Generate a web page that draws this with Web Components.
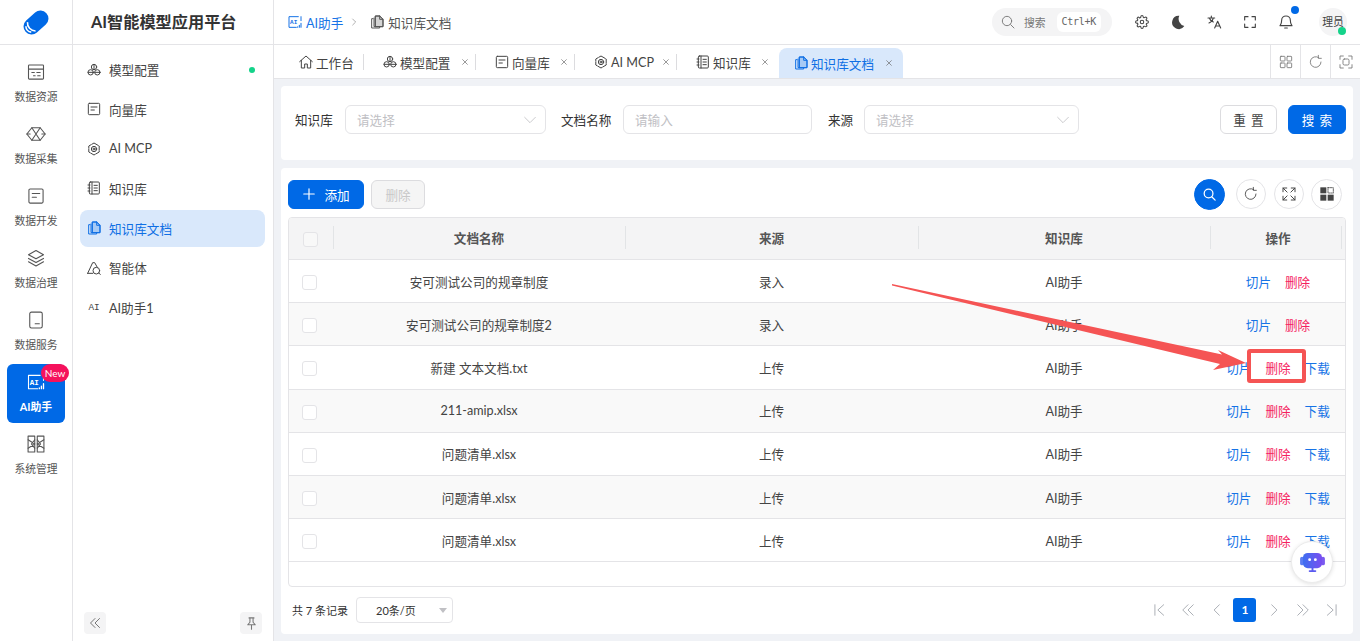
<!DOCTYPE html>
<html lang="zh">
<head>
<meta charset="utf-8">
<title>知识库文档</title>
<style>
    html, body {
        margin: 0;
        height: 100%;
        overflow: hidden;
        background: #fff;
        color: #333;
        font-family: Lato, "Noto Sans CJK SC", sans-serif;
        font-size: 12.6px;
    }
</style>
</head>
<body>
<app-shell>
    <nav-rail slot="rail">
        <rail-item icon="panel" label="数据资源"></rail-item>
        <rail-item icon="hexnet" label="数据采集"></rail-item>
        <rail-item icon="doc" label="数据开发"></rail-item>
        <rail-item icon="layers" label="数据治理"></rail-item>
        <rail-item icon="service" label="数据服务"></rail-item>
        <rail-item icon="aibox" label="AI助手" active badge="New"></rail-item>
        <rail-item icon="sys" label="系统管理"></rail-item>
    </nav-rail>
    <side-menu slot="side" title="AI智能模型应用平台">
        <menu-item icon="cubes" dot>模型配置</menu-item>
        <menu-item icon="doc">向量库</menu-item>
        <menu-item icon="mcp">AI MCP</menu-item>
        <menu-item icon="book">知识库</menu-item>
        <menu-item icon="docs" active>知识库文档</menu-item>
        <menu-item icon="agent">智能体</menu-item>
        <menu-item icon="ai">AI助手1</menu-item>
    </side-menu>
    <top-bar slot="top"></top-bar>
    <tab-bar slot="tabs">
        <tab-item icon="home" width="84" fixed>工作台</tab-item>
        <tab-item icon="cubes" width="112">模型配置</tab-item>
        <tab-item icon="doc" width="99">向量库</tab-item>
        <tab-item icon="mcp" width="102">AI MCP</tab-item>
        <tab-item icon="book" width="102">知识库</tab-item>
        <tab-item icon="docs" width="124" active>知识库文档</tab-item>
    </tab-bar>
    <filter-form slot="content"></filter-form>
    <doc-panel slot="content">
        <doc-row name="安可测试公司的规章制度" source="录入" kb="AI助手"></doc-row>
        <doc-row name="安可测试公司的规章制度2" source="录入" kb="AI助手"></doc-row>
        <doc-row name="新建 文本文档.txt" source="上传" kb="AI助手" download></doc-row>
        <doc-row name="211-amip.xlsx" source="上传" kb="AI助手" download></doc-row>
        <doc-row name="问题清单.xlsx" source="上传" kb="AI助手" download></doc-row>
        <doc-row name="问题清单.xlsx" source="上传" kb="AI助手" download></doc-row>
        <doc-row name="问题清单.xlsx" source="上传" kb="AI助手" download></doc-row>
    </doc-panel>
</app-shell>
<chat-bubble></chat-bubble>
<call-out></call-out>

<script>
const BLUE = '#0069e6';

// icon paths, all on a 24 box
const ICONS = {
    panel: '<rect x="3" y="3.5" width="18" height="17" rx="1"/><path d="M3 8.5h18M7 12.5h3M13 12.5h4M9 16.5h2M14 16.5h3"/>',
    hexnet: '<path d="M7 4.5h10L23 12l-6 7.5H7L1 12z"/><path d="M7 4.5l10 15M17 4.5L7 19.5"/><path d="M1 12h4M19 12h4"/>',
    doc: '<rect x="3.5" y="3.5" width="17" height="17" rx="1.5"/><path d="M7.5 9h9M7.5 13.5h5"/>',
    layers: '<path d="M12 3l9 5-9 5-9-5z"/><path d="M3 12.5l9 5 9-5"/><path d="M3 16.5l9 5 9-5"/>',
    service: '<rect x="4.5" y="2.5" width="15" height="19" rx="2"/><path d="M11 16.5h5"/>',
    aibox: '<path d="M17 4H3v16h11M21 4v6"/><text x="10" y="15" text-anchor="middle" font-size="9" font-weight="700" fill="currentColor" stroke="none" font-family="Liberation Mono">AI</text><path d="M16 20v-1M18.5 20v-3M21 20v-6" stroke-width="1.6"/>',
    sys: '<rect x="2.5" y="2.5" width="8" height="19"/><rect x="13.5" y="2.5" width="8" height="19"/><path d="M2.5 7l8 5-8 5M10.5 7l-4 5 4 5M21.5 7l-8 5 8 5M13.5 7l4 5-4 5"/>',
    cubes: '<circle cx="12" cy="7.5" r="4"/><circle cx="7" cy="15.5" r="4"/><circle cx="17" cy="15.5" r="4"/><path d="M12 3.5v8M3 15.5h8M13 15.5h8"/>',
    mcp: '<path d="M12 3l7.8 4.5v9L12 21l-7.8-4.5v-9z" stroke-dasharray="7 1.4"/><circle cx="12" cy="12" r="4"/><circle cx="12" cy="12" r="1.5"/>',
    book: '<rect x="5" y="3" width="15" height="18" rx="1.5"/><path d="M9 3v18M12 8h5M12 12h5M12 16h5M3 7.5h3M3 12h3M3 16.5h3"/>',
    docs: '<path d="M10 3h6l5 5v11H10z" fill="currentColor" fill-opacity=".25"/><path d="M16 3v5h5"/><path d="M6 7H4v14h12v-2"/><path d="M7.5 6v13H10"/><path d="M10 3h6l5 5v11H10z"/>',
    agent: '<path d="M2.5 20L10 4h3l4 7"/><path d="M2.5 20H10"/><circle cx="15.5" cy="16" r="5"/><path d="M19 19.5l2.5 2"/>',
    ai: '<text x="12" y="17" text-anchor="middle" font-size="14" fill="currentColor" stroke="none" font-family="Liberation Mono">AI</text>',
    home: '<path d="M2.5 11.5L12 3l9.5 8.5"/><path d="M5 9.5V21h5v-6h4v6h5V9.5"/>',
    search: '<circle cx="10.5" cy="10.5" r="7"/><path d="M16 16l5 5"/>',
    gear: '<circle cx="12" cy="12" r="3"/><path d="M19.4 15a1.65 1.65 0 0 0 .33 1.82l.06.06a2 2 0 1 1-2.83 2.83l-.06-.06a1.65 1.65 0 0 0-2.82 1.18V21a2 2 0 1 1-4 0v-.09a1.65 1.65 0 0 0-2.82-1.18l-.06.06a2 2 0 1 1-2.83-2.83l.06-.06A1.65 1.65 0 0 0 3.09 14H3a2 2 0 1 1 0-4h.09a1.65 1.65 0 0 0 1.18-2.82l-.06-.06a2 2 0 1 1 2.83-2.83l.06.06A1.65 1.65 0 0 0 10 3.09V3a2 2 0 1 1 4 0v.09a1.65 1.65 0 0 0 2.82 1.18l.06-.06a2 2 0 1 1 2.83 2.83l-.06.06A1.65 1.65 0 0 0 20.91 10H21a2 2 0 1 1 0 4h-.09a1.65 1.65 0 0 0-1.51 1z"/>',
    moon: '<path d="M14 2.500A10 10 0 1 0 21.500 18 11 11 0 0 1 14 2.500z" fill="currentColor" stroke="none"/>',
    lang: '<path d="M3 6h10M8 3v3M11 6c-.7 3.500-3 6-6.500 7.500M5 6c.7 2.500 2.500 4.500 6 6"/><path d="M13 21l4.500-10L22 21M14.500 18h6"/>',
    full: '<path d="M4 9V4h5M15 4h5v5M20 15v5h-5M9 20H4v-5"/>',
    bell: '<path d="M12 3a6.500 6.500 0 0 0-6.500 6.500c0 5-1.500 6.500-2.500 8h18c-1-1.500-2.500-3-2.500-8A6.500 6.500 0 0 0 12 3z"/><path d="M10 21h4"/>',
    grid: '<rect x="3.500" y="3.500" width="7" height="7" rx="1"/><rect x="13.500" y="3.500" width="7" height="7" rx="1"/><rect x="3.500" y="13.500" width="7" height="7" rx="1"/><rect x="13.500" y="13.500" width="7" height="7" rx="1"/>',
    refresh: '<path d="M19.500 12A8 8 0 1 1 16 5.400"/><path d="M15.500 2v4.500H20" />',
    focus: '<path d="M3 8V3h5M16 3h5v5M21 16v5h-5M8 21H3v-5"/><rect x="7.500" y="7.500" width="9" height="9" rx="2"/>',
    expand: '<path d="M4 9V4h5M4 4l5.500 5.500M20 9V4h-5M20 4l-5.500 5.500M4 15v5h5M4 20l5.500-5.500M20 15v5h-5M20 20l-5.500-5.500"/>',
    tiles: '<rect x="2" y="2" width="9" height="9" fill="currentColor" stroke="none"/><rect x="13.500" y="2.500" width="8" height="8" stroke-dasharray="2 1.500"/><rect x="2" y="13" width="9" height="9" fill="currentColor" stroke="none"/><rect x="13" y="13" width="9" height="9" fill="currentColor" stroke="none"/>',
    plus: '<path d="M12 3v18M3 12h18"/>',
    chevron: '<path d="M4 8l8 8 8-8"/>',
    close: '<path d="M5 5l14 14M19 5L5 19"/>',
    right: '<path d="M8 3l9 9-9 9"/>',
    left: '<path d="M16 3l-9 9 9 9"/>',
    dleft: '<path d="M12 3l-9 9 9 9M21 3l-9 9 9 9"/>',
    dright: '<path d="M12 3l9 9-9 9M3 3l9 9-9 9"/>',
    first: '<path d="M5 3v18M20 3l-10 9 10 9"/>',
    last: '<path d="M19 3v18M4 3l10 9-10 9"/>',
    pin: '<path d="M8 3h8M9.500 3v7L6 14h12l-3.500-4V3M12 14v7"/>'
};

class UiIcon extends HTMLElement {
    connectedCallback() {
        if (this.shadowRoot) return;
        const size = this.getAttribute('size') || 14;
        const weight = this.getAttribute('weight') || 1.7;
        this.attachShadow({ mode: 'open' }).innerHTML = `
            <style>
                :host { display: inline-flex; flex: none; width: ${size}px; height: ${size}px; }
                svg { width: 100%; height: 100%; display: block; }
            </style>
            <svg viewBox="0 0 24 24" fill="none" stroke="currentColor" stroke-width="${weight}"
                stroke-linecap="round" stroke-linejoin="round">${ICONS[this.getAttribute('name')] || ''}</svg>`;
    }
}
customElements.define('ui-icon', UiIcon);

const shellTemplate = document.createElement('template');
shellTemplate.innerHTML = `
    <style>
        :host { display: flex; height: 641px; width: 1360px; }
        .main { flex: 1; min-width: 0; display: flex; flex-direction: column; }
        .content {
            flex: 1;
            min-height: 0;
            display: flex;
            flex-direction: column;
            gap: 8px;
            padding: 7px;
            background: #f0f2f6;
        }
    </style>
    <slot name="rail"></slot>
    <slot name="side"></slot>
    <div class="main">
        <slot name="top"></slot>
        <slot name="tabs"></slot>
        <div class="content"><slot name="content"></slot></div>
    </div>
`;
class AppShell extends HTMLElement {
    connectedCallback() {
        this.attachShadow({ mode: 'open' }).appendChild(shellTemplate.content.cloneNode(true));
    }
}
customElements.define('app-shell', AppShell);

const railTemplate = document.createElement('template');
railTemplate.innerHTML = `
    <style>
        :host {
            display: flex;
            flex-direction: column;
            flex: none;
            width: 72px;
            border-right: 1px solid #e4e4e7;
        }
        .logo {
            height: 44px;
            border-bottom: 1px solid #e4e4e7;
            display: flex;
            align-items: center;
            justify-content: center;
        }
        .items { display: flex; flex-direction: column; align-items: center; padding-top: 9px; gap: 3px; }
    </style>
    <div class="logo">
        <svg width="26" height="27" viewBox="0 0 26 27">
            <g transform="rotate(-42 13 13.500)">
                <rect x="-1" y="5.500" width="28" height="16" rx="8" fill="#0069e6"/>
                <path d="M3 9.500a6 6 0 0 0 0 8" fill="none" stroke="#fff" stroke-width="1.600"/>
                <path d="M7 7.500a8 8 0 0 0 0 12" fill="none" stroke="#fff" stroke-width="1.600"/>
            </g>
        </svg>
    </div>
    <div class="items"><slot></slot></div>
`;
class NavRail extends HTMLElement {
    connectedCallback() {
        this.attachShadow({ mode: 'open' }).appendChild(railTemplate.content.cloneNode(true));
    }
}
customElements.define('nav-rail', NavRail);

class RailItem extends HTMLElement {
    connectedCallback() {
        const badge = this.getAttribute('badge');
        this.attachShadow({ mode: 'open' }).innerHTML = `
            <style>
                :host {
                    display: flex;
                    flex-direction: column;
                    align-items: center;
                    gap: 7px;
                    position: relative;
                    box-sizing: border-box;
                    padding-top: 8px;
                    width: 58px;
                    height: 59px;
                    border-radius: 6px;
                    color: #555;
                    font-size: 10.8px;
                    line-height: 15px;
                }
                :host([active]) { background: ${BLUE}; color: #fff; font-weight: 700; }
                .badge {
                    position: absolute;
                    top: 0;
                    right: -4px;
                    width: 28px;
                    height: 18px;
                    border-radius: 9px;
                    background: #f5115c;
                    color: #fff;
                    font-size: 10px;
                    font-weight: 400;
                    line-height: 18px;
                    text-align: center;
                }
            </style>
            <ui-icon name="${this.getAttribute('icon')}" size="20" weight="1.300"></ui-icon>
            <span>${this.getAttribute('label')}</span>
            ${badge ? `<span class="badge">${badge}</span>` : ''}
        `;
    }
}
customElements.define('rail-item', RailItem);

class SideMenu extends HTMLElement {
    connectedCallback() {
        this.attachShadow({ mode: 'open' }).innerHTML = `
            <style>
                :host {
                    display: flex;
                    flex-direction: column;
                    flex: none;
                    width: 200px;
                    border-right: 1px solid #e4e4e7;
                }
                .title {
                    height: 44px;
                    border-bottom: 1px solid #e4e4e7;
                    box-sizing: content-box;
                    padding-left: 18px;
                    line-height: 43px;
                    font-size: 16.2px;
                    font-weight: 700;
                    color: #333;
                }
                .items {
                    flex: 1;
                    display: flex;
                    flex-direction: column;
                    gap: 2.670px;
                    padding: 6px 8px 0 7px;
                }
                .foot { display: flex; justify-content: space-between; padding: 0 11px 7px; }
                .foot span {
                    width: 22px;
                    height: 22px;
                    border-radius: 4px;
                    background: #f4f4f5;
                    color: #777;
                    display: flex;
                    align-items: center;
                    justify-content: center;
                }
            </style>
            <div class="title">${this.getAttribute('title')}</div>
            <div class="items"><slot></slot></div>
            <div class="foot">
                <span><ui-icon name="dleft" size="12" weight="2"></ui-icon></span>
                <span><ui-icon name="pin" size="15"></ui-icon></span>
            </div>
        `;
    }
}
customElements.define('side-menu', SideMenu);

class MenuItem extends HTMLElement {
    connectedCallback() {
        const dot = this.hasAttribute('dot') ? '<i class="dot"></i>' : '';
        this.attachShadow({ mode: 'open' }).innerHTML = `
            <style>
                :host {
                    display: flex;
                    align-items: center;
                    gap: 7px;
                    height: 37px;
                    padding: 0 10px 0 6px;
                    border-radius: 8px;
                    color: #444;
                    font-size: 12.6px;
                }
                :host([active]) { background: #d9e8fb; color: #0f6fe4; }
                .dot { margin-left: auto; width: 6px; height: 6px; border-radius: 50%; background: #14d38a; }
            </style>
            <ui-icon name="${this.getAttribute('icon')}" size="16" weight="1.500"></ui-icon>
            <span><slot></slot></span>
            ${dot}
        `;
    }
}
customElements.define('menu-item', MenuItem);

const topTemplate = document.createElement('template');
topTemplate.innerHTML = `
    <style>
        :host {
            display: flex;
            align-items: center;
            flex: none;
            height: 44px;
            padding: 0 13px 0 13px;
            border-bottom: 1px solid #e4e4e7;
            box-sizing: content-box;
        }
        .crumb { display: flex; align-items: center; gap: 3px; font-size: 12.6px; color: #555; }
        .crumb.link { color: #1673e6; }
        .sep { margin: 0 11px 0 7px; color: #888; display: flex; }
        .tools { margin-left: auto; display: flex; align-items: center; }
        .search {
            display: flex;
            align-items: center;
            width: 120px;
            height: 28px;
            box-sizing: border-box;
            padding: 0 4px 0 8px;
            border-radius: 14px;
            background: #f4f4f5;
            color: #777;
            font-size: 10.8px;
            margin-right: 12px;
        }
        .search b {
            margin-left: 8px;
            margin-right: 11px;
            font-weight: 400;
        }
        kbd {
            background: #fff;
            border-radius: 6px;
            height: 20px;
            padding: 0 5px;
            font: 10px "DejaVu Sans Mono", monospace;
            line-height: 20px;
            letter-spacing: -.3px;
            color: #666;
        }
        .tool { width: 36px; display: flex; justify-content: center; color: #444; position: relative; }
        .blue-dot {
            position: absolute;
            top: -8px;
            right: 5px;
            width: 8px;
            height: 8px;
            border-radius: 50%;
            background: ${BLUE};
        }
        .avatar {
            position: relative;
            width: 28px;
            height: 28px;
            margin-left: 15px;
            border-radius: 50%;
            background: #f4f4f5;
            font-size: 10.8px;
            line-height: 28px;
            text-align: center;
            color: #444;
        }
        .avatar i {
            position: absolute;
            right: 1px;
            bottom: 1px;
            width: 8px;
            height: 8px;
            border-radius: 50%;
            background: #14d38a;
        }
    </style>
    <div class="crumb link"><ui-icon name="aibox" size="16" weight="1.500"></ui-icon>AI助手</div>
    <span class="sep"><ui-icon name="right" size="8" weight="2"></ui-icon></span>
    <div class="crumb"><ui-icon name="docs" size="16" weight="1.500"></ui-icon>知识库文档</div>
    <div class="tools">
        <div class="search">
            <ui-icon name="search" size="16" weight="1.400"></ui-icon>
            <b>搜索</b>
            <kbd>Ctrl+K</kbd>
        </div>
        <div class="tool"><ui-icon name="gear" size="14" weight="1.800"></ui-icon></div>
        <div class="tool"><ui-icon name="moon" size="16"></ui-icon></div>
        <div class="tool"><ui-icon name="lang" size="16"></ui-icon></div>
        <div class="tool"><ui-icon name="full" size="16"></ui-icon></div>
        <div class="tool"><ui-icon name="bell" size="16"></ui-icon><i class="blue-dot"></i></div>
        <div class="avatar">理员<i></i></div>
    </div>
`;
class TopBar extends HTMLElement {
    connectedCallback() {
        this.attachShadow({ mode: 'open' }).appendChild(topTemplate.content.cloneNode(true));
    }
}
customElements.define('top-bar', TopBar);

const tabsTemplate = document.createElement('template');
tabsTemplate.innerHTML = `
    <style>
        :host {
            display: flex;
            flex: none;
            height: 33px;
            padding-left: 6px;
            border-bottom: 1px solid #e4e4e7;
            box-sizing: content-box;
        }
        .list { display: flex; align-items: flex-end; flex: 1; }
        .btn {
            width: 29px;
            display: flex;
            align-items: center;
            justify-content: center;
            border-left: 1px solid #e4e4e7;
            color: #777;
        }
    </style>
    <div class="list"><slot></slot></div>
    <div class="btn"><ui-icon name="grid" size="16" weight="1.300"></ui-icon></div>
    <div class="btn"><ui-icon name="refresh" size="16" weight="1.300"></ui-icon></div>
    <div class="btn"><ui-icon name="focus" size="16" weight="1.300"></ui-icon></div>
`;
class TabBar extends HTMLElement {
    connectedCallback() {
        this.attachShadow({ mode: 'open' }).appendChild(tabsTemplate.content.cloneNode(true));
    }
}
customElements.define('tab-bar', TabBar);

class TabItem extends HTMLElement {
    connectedCallback() {
        const fixed = this.hasAttribute('fixed');
        this.attachShadow({ mode: 'open' }).innerHTML = `
            <style>
                :host {
                    display: flex;
                    align-items: center;
                    position: relative;
                    flex: none;
                    box-sizing: border-box;
                    width: ${this.getAttribute('width')}px;
                    height: 30px;
                    padding: 0 7px 0 18px;
                    color: #444;
                    font-size: 12.6px;
                }
                :host(:nth-last-child(2)) { padding-right: 10px; }
                :host(:not([active])) { margin-bottom: 1px; }
                :host([active]) {
                    background: #d9e8fb;
                    color: #0f6fe4;
                    border-radius: 8px 8px 0 0;
                    padding-left: 14px;
                    padding-right: 10px;
                }
                :host(:not([active]))::after {
                    content: '';
                    position: absolute;
                    right: 0;
                    top: 7px;
                    height: 16px;
                    border-right: 1px solid #dcdcdf;
                }
                :host(:nth-last-child(2))::after { display: none; }
                ui-icon { margin-right: 2px; }
                .x { margin-left: auto; margin-right: 0; color: #666; }
            </style>
            <ui-icon name="${this.getAttribute('icon')}" size="16" weight="1.500"></ui-icon>
            <span><slot></slot></span>
            ${fixed ? '' : '<ui-icon class="x" name="close" size="8" weight="2"></ui-icon>'}
        `;
    }
}
customElements.define('tab-item', TabItem);

class FormField extends HTMLElement {
    connectedCallback() {
        const select = this.hasAttribute('select');
        this.attachShadow({ mode: 'open' }).innerHTML = `
            <style>
                :host { display: flex; align-items: center; color: #333; font-size: 12.6px; }
                .label { white-space: nowrap; }
                .ctl {
                    display: flex;
                    align-items: center;
                    justify-content: space-between;
                    box-sizing: border-box;
                    height: 29px;
                    padding: 0 7px 0 11px;
                    border: 1px solid #e4e4e7;
                    border-radius: 6px;
                    color: #c0c0c4;
                    background: #fff;
                }
            </style>
            <span class="label" style="width:${this.getAttribute('label-width')}px">${this.getAttribute('label')}</span>
            <div class="ctl" style="width:${this.getAttribute('width')}px">
                <span>${this.getAttribute('hint')}</span>
                ${select ? '<ui-icon name="chevron" size="16" weight="1.300"></ui-icon>' : ''}
            </div>
        `;
    }
}
customElements.define('form-field', FormField);

class UiButton extends HTMLElement {
    connectedCallback() {
        this.attachShadow({ mode: 'open' }).innerHTML = `
            <style>
                :host {
                    display: inline-flex;
                    align-items: center;
                    justify-content: center;
                    box-sizing: border-box;
                    height: 29px;
                    border-radius: 6px;
                    border: 1px solid #dcdcdf;
                    background: #fff;
                    color: #444;
                    font-size: 12.6px;
                }
                :host([primary]) { background: ${BLUE}; border-color: ${BLUE}; color: #fff; }
                :host([disabled]) { background: #f5f5f5; color: #c8c8c8; }
            </style>
            <slot></slot>
        `;
    }
}
customElements.define('ui-button', UiButton);

const formTemplate = document.createElement('template');
formTemplate.innerHTML = `
    <style>
        :host {
            display: flex;
            align-items: flex-start;
            gap: 15px;
            flex: none;
            height: 74px;
            box-sizing: border-box;
            padding: 19px 7px 0 14px;
            background: #fff;
            border-radius: 4px;
        }
        .btns { margin-left: auto; display: flex; gap: 11px; }
    </style>
    <form-field label="知识库" label-width="50" hint="请选择" width="201" select></form-field>
    <form-field label="文档名称" label-width="62" hint="请输入" width="189"></form-field>
    <form-field label="来源" label-width="36" hint="请选择" width="215" select style="margin-left:1px"></form-field>
    <div class="btns">
        <ui-button style="width:57px"><span style="word-spacing:2px">重 置</span></ui-button>
        <ui-button primary style="width:58px"><span style="word-spacing:2px">搜 索</span></ui-button>
    </div>
`;
class FilterForm extends HTMLElement {
    connectedCallback() {
        this.attachShadow({ mode: 'open' }).appendChild(formTemplate.content.cloneNode(true));
    }
}
customElements.define('filter-form', FilterForm);

const COLS = '45px 292px 293px 292px 1fr';
const panelTemplate = document.createElement('template');
panelTemplate.innerHTML = `
    <style>
        :host {
            display: flex;
            flex-direction: column;
            flex: 1;
            min-height: 0;
            box-sizing: border-box;
            padding: 12px 7px 11px;
            background: #fff;
            border-radius: 4px;
        }
        .bar { display: flex; align-items: center; height: 28px; gap: 7px; margin-bottom: 9px; }
        .round {
            width: 30px;
            height: 30px;
            box-sizing: border-box;
            border: 1px solid #e4e4e7;
            border-radius: 50%;
            display: flex;
            align-items: center;
            justify-content: center;
            color: #444;
        }
        .round.on { width: 31px; height: 31px; background: ${BLUE}; border-color: ${BLUE}; color: #fff; margin-right: 4px; }
        .round.mid { margin-right: 1px; }
        .round.end { width: 31px; height: 31px; }
        .rounds { margin-left: auto; margin-right: 4px; display: flex; align-items: center; gap: 7px; }
        .table {
            flex: 1;
            min-height: 0;
            border: 1px solid #e4e4e7;
            border-radius: 4px;
            overflow: hidden;
        }
        .head {
            display: grid;
            grid-template-columns: ${COLS};
            align-items: center;
            height: 42px;
            box-sizing: border-box;
            padding-bottom: 2px;
            background: #f4f4f5;
            border-bottom: 1px solid #e4e4e7;
            color: #555;
            font-weight: 700;
            font-size: 12.6px;
            text-align: center;
        }
        .head span { position: relative; padding-right: 2px; }
        .head span::after {
            content: '';
            position: absolute;
            right: 0;
            top: -2px;
            bottom: -2px;
            border-right: 1px solid #e2e4e6;
        }
        .head .last { padding-right: 0; }
        .head .last::after { right: 3px; }
        .head .cb { display: flex; justify-content: center; padding-right: 0; }
        ::slotted(doc-row:nth-child(even)) { background: #f9f9f9; }
        .box {
            width: 13px;
            height: 13px;
            border: 1px solid #e4e4e7;
            border-radius: 3px;
            background: #f8f8f8;
            margin-left: -3px;
            margin-top: 4px;
        }
        .foot { display: flex; align-items: center; margin-top: 10px; padding-left: 4px; height: 26px; font-size: 11px; }
        .total { width: 56px; white-space: nowrap; }
        .size {
            display: flex;
            align-items: center;
            box-sizing: border-box;
            width: 97px;
            height: 26px;
            margin-left: 8px;
            padding: 0 5px 0 19px;
            border: 1px solid #e4e4e7;
            border-radius: 4px;
        }
        .size i {
            margin-left: auto;
            border: 4.500px solid transparent;
            border-top: 5px solid #c0c0c4;
            border-bottom: 0;
        }
        .pages { margin-left: auto; display: flex; align-items: center; color: #a0a5ab; }
        .pages ui-icon { margin: 0 7.350px; }
        .pages b {
            width: 23px;
            height: 24px;
            margin: 0 3.500px 0 2.500px;
            border-radius: 3px;
            background: ${BLUE};
            color: #fff;
            font-size: 12px;
            line-height: 24px;
            text-align: center;
        }
    </style>
    <div class="bar">
        <ui-button primary style="width:76px"><ui-icon name="plus" size="14" weight="2"></ui-icon><span style="margin-left:8px">添加</span></ui-button>
        <ui-button disabled style="width:54px">删除</ui-button>
        <div class="rounds">
            <div class="round on"><ui-icon name="search" size="15" weight="2"></ui-icon></div>
            <div class="round mid"><ui-icon name="refresh" size="16" weight="1.300"></ui-icon></div>
            <div class="round"><ui-icon name="expand" size="18" weight="1.300"></ui-icon></div>
            <div class="round end"><ui-icon name="tiles" size="16" weight="1.200"></ui-icon></div>
        </div>
    </div>
    <div class="table">
        <div class="head">
            <span class="cb"><i class="box"></i></span>
            <span>文档名称</span>
            <span>来源</span>
            <span>知识库</span>
            <span class="last">操作</span>
        </div>
        <slot></slot>
    </div>
    <div class="foot">
        <span class="total">共 7 条记录</span>
        <div class="size">20条/页<i></i></div>
        <div class="pages">
            <ui-icon name="first" size="14" weight="1.500"></ui-icon>
            <ui-icon name="dleft" size="14" weight="1.500"></ui-icon>
            <ui-icon name="left" size="14" weight="1.500"></ui-icon>
            <b>1</b>
            <ui-icon name="right" size="14" weight="1.500"></ui-icon>
            <ui-icon name="dright" size="14" weight="1.500"></ui-icon>
            <ui-icon name="last" size="14" weight="1.500"></ui-icon>
        </div>
    </div>
`;
class DocPanel extends HTMLElement {
    connectedCallback() {
        this.attachShadow({ mode: 'open' }).appendChild(panelTemplate.content.cloneNode(true));
    }
}
customElements.define('doc-panel', DocPanel);

class DocRow extends HTMLElement {
    connectedCallback() {
        const attr = n => this.getAttribute(n);
        this.attachShadow({ mode: 'open' }).innerHTML = `
            <style>
                :host {
                    display: grid;
                    grid-template-columns: ${COLS};
                    align-items: center;
                    height: 43.200px;
                    box-sizing: border-box;
                    border-bottom: 1px solid #e4e4e7;
                    text-align: center;
                    color: #444;
                    font-size: 12.6px;
                }
                .cell { padding-right: 2px; }
                .box {
                    width: 13px;
                    height: 13px;
                    border: 1px solid #e4e4e7;
                    border-radius: 3px;
                    background: #fff;
                    margin: 3px 0 0 13px;
                }
                .acts { display: flex; justify-content: center; gap: 14px; color: #1673e6; }
                .del { color: #f5225e; }
            </style>
            <i class="box"></i>
            <span class="cell">${attr('name')}</span>
            <span class="cell">${attr('source')}</span>
            <span class="cell">${attr('kb')}</span>
            <div class="acts">
                <span>切片</span>
                <span class="del">删除</span>
                ${this.hasAttribute('download') ? '<span>下载</span>' : ''}
            </div>
        `;
    }
}
customElements.define('doc-row', DocRow);

class ChatBubble extends HTMLElement {
    connectedCallback() {
        this.attachShadow({ mode: 'open' }).innerHTML = `
            <style>
                :host {
                    position: absolute;
                    left: 1291px;
                    top: 541px;
                    width: 42px;
                    height: 42px;
                    box-sizing: border-box;
                    border-radius: 50%;
                    border: 1px solid #ececec;
                    background: #fff;
                    box-shadow: 0 1px 4px rgba(0,0,0,.12);
                    display: flex;
                    align-items: center;
                    justify-content: center;
                }
            </style>
            <svg width="25" height="21" viewBox="0 0 26 22">
                <defs><linearGradient id="g" x1="0" x2="1"><stop offset="0" stop-color="#3d6ff0"/><stop offset="1" stop-color="#7a4df0"/></linearGradient></defs>
                <rect x="0" y="5" width="4" height="9" rx="2" fill="#5a7cf2"/>
                <rect x="22" y="5" width="4" height="9" rx="2" fill="#7a5af0"/>
                <rect x="3" y="1" width="20" height="16" rx="5" fill="url(#g)"/>
                <circle cx="10" cy="8" r="1.500" fill="#fff"/>
                <circle cx="16" cy="8" r="1.500" fill="#fff"/>
                <rect x="9" y="19" width="8" height="2" rx="1" fill="#5a5af0"/>
                <rect x="12" y="16" width="2" height="4" fill="#5a5af0"/>
            </svg>
        `;
    }
}
customElements.define('chat-bubble', ChatBubble);

// the red annotation on top of the page
class CallOut extends HTMLElement {
    connectedCallback() {
        this.attachShadow({ mode: 'open' }).innerHTML = `
            <style>
                :host { position: absolute; left: 0; top: 0; width: 1360px; height: 641px; pointer-events: none; }
                svg { display: block; }
            </style>
            <svg width="1360" height="641" viewBox="0 0 1360 641">
                <rect x="1249" y="351" width="55" height="30" rx="1" fill="none" stroke="#f55454" stroke-width="4"/>
                <polygon points="892,284 1222,354.500 1218,350 1246,363 1213,370 1220,364 892,285.500" fill="#f55454"/>
            </svg>
        `;
    }
}
customElements.define('call-out', CallOut);
</script>
</body>
</html>
